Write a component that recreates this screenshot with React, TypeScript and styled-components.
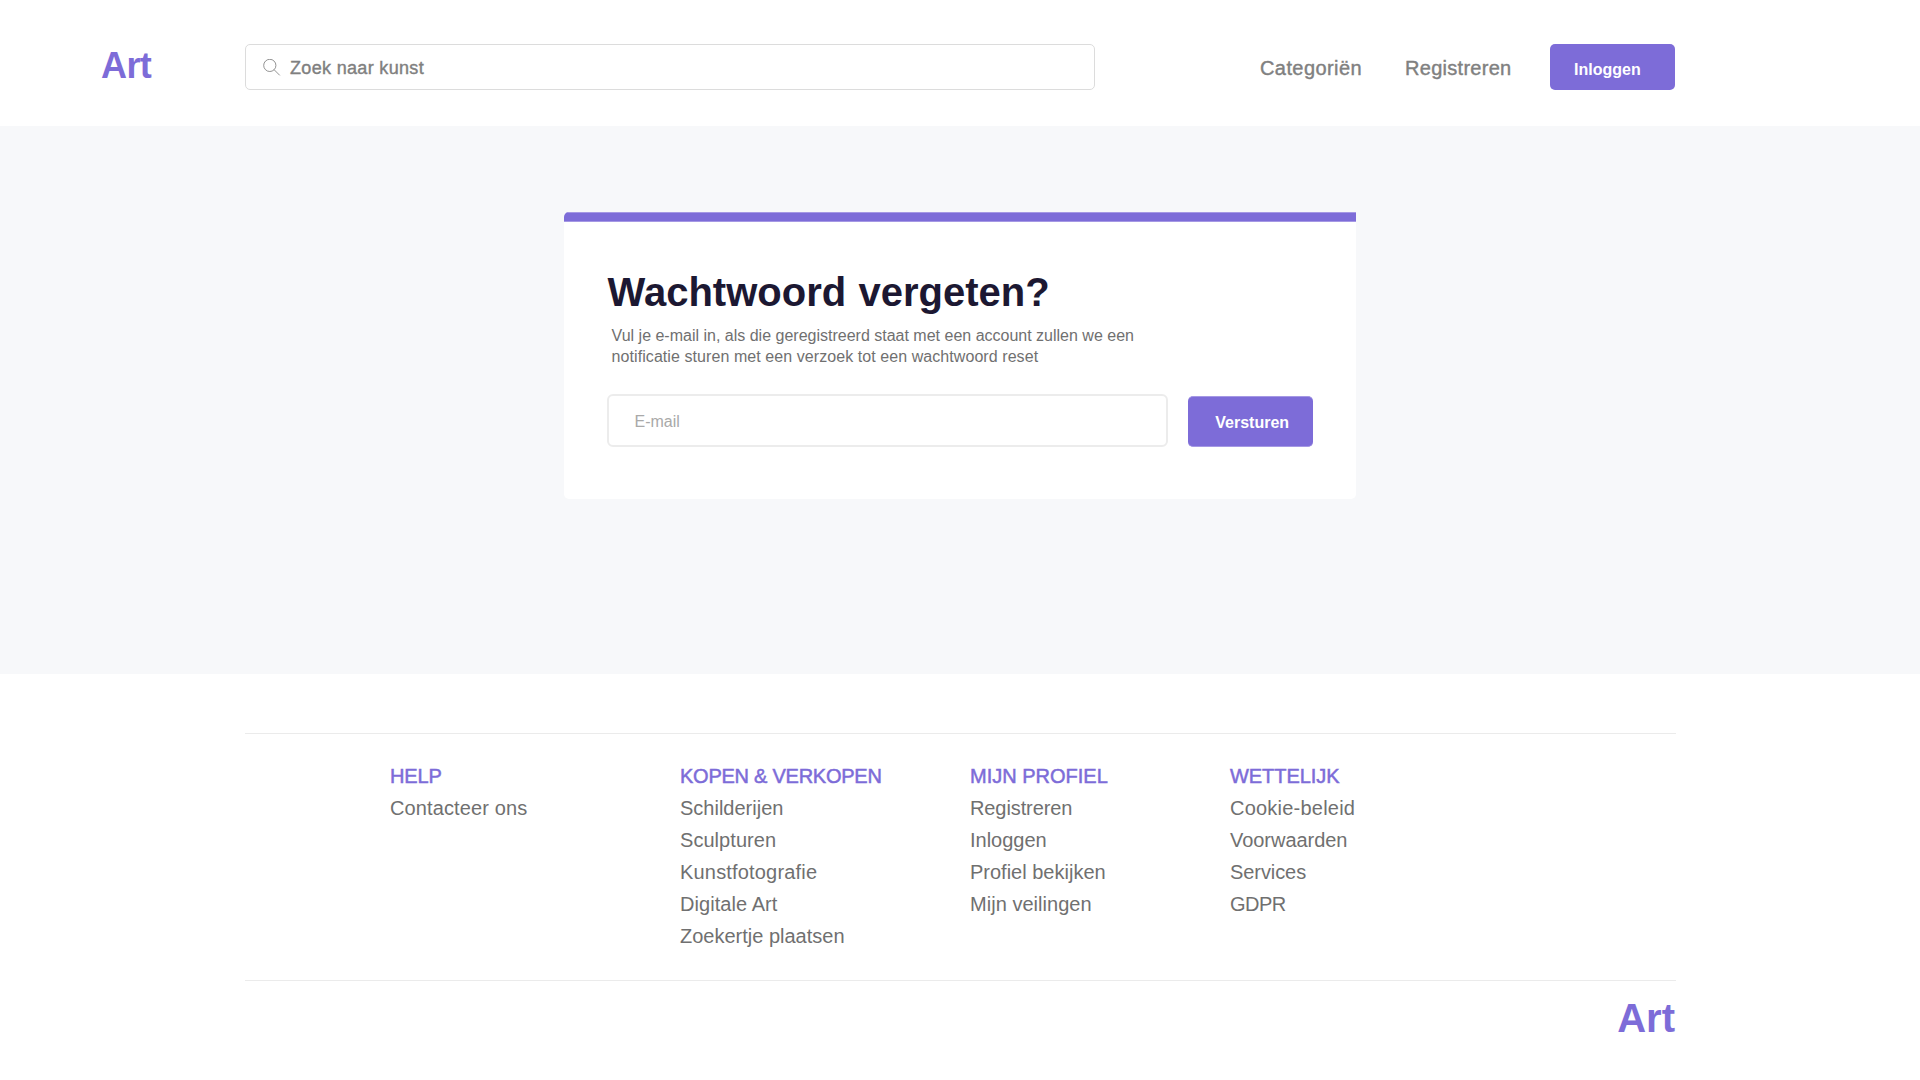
import React from 'react';
import styled, { createGlobalStyle } from 'styled-components';

const purple = '#7d6cd8';
const purpleEdge = '#a598e4';

const GlobalStyle = createGlobalStyle`
  * { box-sizing: border-box; }
  body {
    margin: 0;
    background: #fff;
    font-family: "Liberation Sans", Arial, sans-serif;
    color: #707070;
  }
`;

const Page = styled.div`
  width: 1920px;
  height: 1080px;
  overflow: hidden;
`;

const Header = styled.header`
  display: flex;
  align-items: flex-start;
  height: 126px;
  padding: 44px 245px 0 101px;
`;

const Logo = styled.span<{ $size: number; $tracking?: number }>`
  display: block;
  font-size: ${(p) => p.$size}px;
  line-height: ${(p) => p.$size}px;
  letter-spacing: ${(p) => p.$tracking ?? 0}px;
  font-weight: 700;
  color: ${purple};
`;

const HeaderLogo = styled.div`
  width: 144px;
  padding-top: 4px;
`;

const Search = styled.label`
  display: flex;
  align-items: center;
  width: 850px;
  height: 46px;
  padding: 2px 17px 0;
  border: 1px solid #dcdcdc;
  border-radius: 5px;
  background: #fff;
`;

const SearchIcon = styled.svg`
  flex: none;
  width: 18px;
  height: 18px;
  margin-right: 9px;
`;

const MediumText = styled.span<{ $size: number; $tracking: number }>`
  font-size: ${(p) => p.$size}px;
  line-height: 24px;
  letter-spacing: ${(p) => p.$tracking}px;
  color: #808080;
  -webkit-text-stroke: 0.4px #808080;
  white-space: nowrap;
`;

const Nav = styled.nav`
  display: flex;
  align-items: flex-start;
  margin-left: auto;
`;

const NavLink = styled.a<{ $gap: number }>`
  padding-top: 12px;
  margin-right: ${(p) => p.$gap}px;
`;

const Button = styled.button<{ $height: number; $inset: number; $drop: number; $edge?: boolean }>`
  height: ${(p) => p.$height}px;
  width: 125px;
  padding: ${(p) => p.$drop}px 0 0 ${(p) => p.$inset}px;
  border: solid ${purpleEdge};
  border-width: ${(p) => (p.$edge ? '1px 0' : '0')};
  border-radius: 5px;
  background: ${purple};
  color: #fff;
  font: 700 16px/20px "Liberation Sans", Arial, sans-serif;
  text-align: left;
`;

const Main = styled.main`
  height: 548px;
  padding-top: 86px;
  background: #f7f8fa;
`;

const Card = styled.section`
  width: 792px;
  height: 287px;
  margin: 0 auto;
  border-radius: 5px 0 5px 5px;
  background: #fff;
  overflow: hidden;
`;

const CardBar = styled.div`
  height: 10px;
  border: solid ${purpleEdge};
  border-width: 1px 0;
  background: ${purple};
`;

const CardBody = styled.div`
  padding: 46px 43px 0;
`;

const Title = styled.h1`
  margin: 0 0 0 0.6px;
  font-size: 40px;
  line-height: 48px;
  font-weight: 700;
  letter-spacing: 0.02px;
  word-spacing: 1px;
  color: #1c1832;
`;

const Lead = styled.p`
  margin: 9px 0 0 4.6px;
  font-size: 16px;
  line-height: 21px;
  color: #707070;
`;

const LeadLine = styled.span<{ $tracking?: number }>`
  display: block;
  letter-spacing: ${(p) => p.$tracking ?? 0}px;
`;

const Form = styled.form`
  display: flex;
  align-items: flex-end;
  justify-content: space-between;
  margin-top: 27px;
`;

const EmailInput = styled.input`
  width: 561px;
  height: 53px;
  padding: 2px 25.5px 0;
  border: 2px solid #ececec;
  border-radius: 6px;
  outline: 0;
  font: 16px "Liberation Sans", Arial, sans-serif;
  &::placeholder { color: #a9a9a9; opacity: 1; }
`;

const Footer = styled.footer`
  width: 1431px;
  margin-left: 245px;
  padding-top: 59px;
`;

const FooterColumns = styled.div`
  display: grid;
  grid-template-columns: 290px 290px 260px auto;
  height: 248px;
  padding: 26px 0 0 145px;
  border: solid #ebebeb;
  border-width: 1px 0;
`;

const ColumnTitle = styled.h2<{ $tracking?: number }>`
  margin: 0;
  font-size: 20px;
  line-height: 32px;
  font-weight: 400;
  letter-spacing: ${(p) => p.$tracking ?? 0}px;
  color: ${purple};
  -webkit-text-stroke: 0.5px ${purple};
`;

const FooterLink = styled.a<{ $tracking?: number }>`
  display: block;
  font-size: 20px;
  line-height: 32px;
  letter-spacing: ${(p) => p.$tracking ?? 0}px;
  color: #707070;
`;

const FooterBrand = styled.div`
  display: flex;
  justify-content: flex-end;
  padding: 17px 1px 0 0;
`;

type Entry = { text: string; tracking?: number };

const columns: { title: Entry; links: Entry[] }[] = [
  { title: { text: 'HELP', tracking: -0.15 }, links: [{ text: 'Contacteer ons', tracking: 0.12 }] },
  {
    title: { text: 'KOPEN & VERKOPEN', tracking: -0.25 },
    links: [
      { text: 'Schilderijen' },
      { text: 'Sculpturen', tracking: 0.05 },
      { text: 'Kunstfotografie', tracking: 0.18 },
      { text: 'Digitale Art', tracking: 0.06 },
      { text: 'Zoekertje plaatsen' },
    ],
  },
  {
    title: { text: 'MIJN PROFIEL' },
    links: [
      { text: 'Registreren', tracking: -0.1 },
      { text: 'Inloggen' },
      { text: 'Profiel bekijken' },
      { text: 'Mijn veilingen', tracking: 0.03 },
    ],
  },
  {
    title: { text: 'WETTELIJK', tracking: -0.05 },
    links: [
      { text: 'Cookie-beleid', tracking: 0.22 },
      { text: 'Voorwaarden', tracking: -0.04 },
      { text: 'Services', tracking: -0.08 },
      { text: 'GDPR', tracking: -0.5 },
    ],
  },
];

export default function App() {
  return (
    <Page>
      <GlobalStyle />
      <Header>
        <HeaderLogo>
          <Logo $size={36} $tracking={-0.6}>Art</Logo>
        </HeaderLogo>
        <Search>
          <SearchIcon viewBox="0 0 18 18" fill="none" stroke="#777" strokeWidth="0.8">
            <circle cx="6.8" cy="6.4" r="6.1" />
            <path d="M11.1 10.7 16.8 16.4" />
          </SearchIcon>
          <MediumText $size={18} $tracking={0.33}>Zoek naar kunst</MediumText>
        </Search>
        <Nav>
          <NavLink $gap={43}><MediumText $size={20} $tracking={0.42}>Categoriën</MediumText></NavLink>
          <NavLink $gap={38.5}><MediumText $size={20} $tracking={0.28}>Registreren</MediumText></NavLink>
          <Button $height={46} $inset={24} $drop={5}>Inloggen</Button>
        </Nav>
      </Header>
      <Main>
        <Card>
          <CardBar />
          <CardBody>
            <Title>Wachtwoord vergeten?</Title>
            <Lead>
              <LeadLine>Vul je e-mail in, als die geregistreerd staat met een account zullen we een</LeadLine>
              <LeadLine $tracking={0.07}>notificatie sturen met een verzoek tot een wachtwoord reset</LeadLine>
            </Lead>
            <Form>
              <EmailInput placeholder="E-mail" />
              <Button type="button" $height={51} $inset={27.3} $drop={2} $edge>Versturen</Button>
            </Form>
          </CardBody>
        </Card>
      </Main>
      <Footer>
        <FooterColumns>
          {columns.map(({ title, links }) => (
            <div key={title.text}>
              <ColumnTitle $tracking={title.tracking}>{title.text}</ColumnTitle>
              {links.map((link) => (
                <FooterLink key={link.text} $tracking={link.tracking}>{link.text}</FooterLink>
              ))}
            </div>
          ))}
        </FooterColumns>
        <FooterBrand>
          <Logo $size={40}>Art</Logo>
        </FooterBrand>
      </Footer>
    </Page>
  );
}
